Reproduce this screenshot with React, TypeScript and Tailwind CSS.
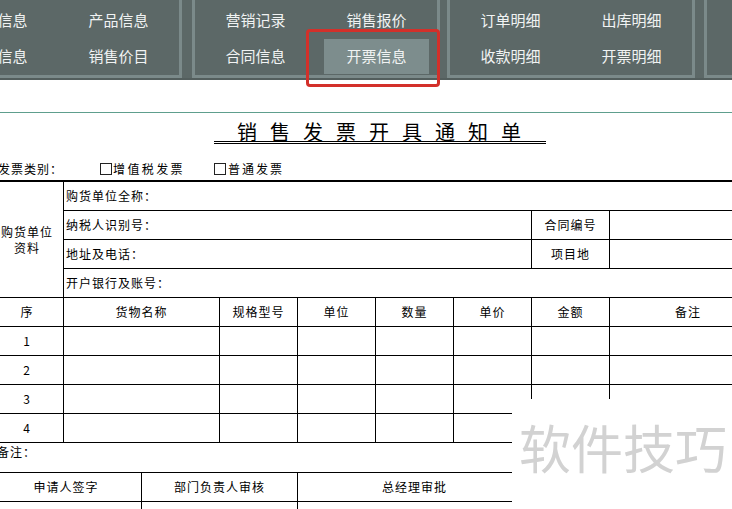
import React from "react"

const panels: { cells: string[][]; gap: string }[] = [
    { cells: [["客户信息", "产品信息"], ["员工信息", "销售价目"]], gap: "ml-[-66px]" },
    { cells: [["营销记录", "销售报价"], ["合同信息", "开票信息"]], gap: "ml-[10px]" },
    { cells: [["订单明细", "出库明细"], ["收款明细", "开票明细"]], gap: "ml-[7px]" },
    { cells: [["", ""], ["", ""]], gap: "ml-[9px]" },
]

function Panel(props: { cells: string[][]; gap: string }) {
    return (
        <div className={`${props.gap} h-[78px] w-[248px] shrink-0 border-x-[3px] border-b-[3px] border-[#7b8a8a] pt-[2px]`}>
            {props.cells.map((row, r) => (
                <div key={r} className="grid h-[36px] grid-cols-2">
                    {row.map((label, c) =>
                        label === "开票信息" ? (
                            <div key={c} className="flex items-center justify-center">
                                <div className="mt-[1px] flex h-[35px] w-[105px] items-center justify-center bg-[#7d8d8d]">{label}</div>
                            </div>
                        ) : (
                            <div key={c} className="flex items-center justify-center">{label}</div>
                        )
                    )}
                </div>
            ))}
        </div>
    )
}

const itemCols = ["w-[73px]", "w-[156px]", "w-[78px]", "w-[78px]", "w-[78px]", "w-[78px]", "w-[78px]"]
const itemHead = ["序", "货物名称", "规格型号", "单位", "数量", "单价", "金额", "备注"]

function ItemRow(props: { values: string[] }) {
    return (
        <div className="flex h-[29px] border-b border-black">
            {itemCols.map((w, i) => (
                <div key={i} className={`${w} flex shrink-0 items-center justify-center border-r border-black`}>
                    {props.values[i]}
                </div>
            ))}
            <div className="flex w-[157px] shrink-0 items-center justify-center border-r border-black">{props.values[7]}</div>
        </div>
    )
}

function SignRow(props: { values: string[] }) {
    return (
        <div className="flex h-[29px] border-b border-black">
            <div className="flex w-[151px] shrink-0 items-center justify-center border-r border-black">{props.values[0]}</div>
            <div className="flex w-[156px] shrink-0 items-center justify-center border-r border-black">{props.values[1]}</div>
            <div className="flex w-[234px] shrink-0 items-center justify-center border-r border-black">{props.values[2]}</div>
            <div className="flex-1" />
        </div>
    )
}

export default function App() {
    return (
        <div className="relative h-[509px] w-[732px] overflow-hidden bg-white font-['Noto_Sans_CJK_SC',sans-serif]">
            {/* ribbon */}
            <div className="flex h-[80px] overflow-hidden border-b-2 border-[#535e5d] bg-[#5c6867] text-[15px] text-[#f1f3f3]">
                {panels.map((p, i) => (
                    <Panel key={i} cells={p.cells} gap={p.gap} />
                ))}
            </div>

            <div className="mt-[32px] border-t border-[#5e9e8d]" />

            {/* form */}
            <div className="ml-[-9px] w-[775px] text-[12px] tracking-[1px] text-black">
                <div className="h-[44px] pt-[10px]">
                    <div className="ml-[223px] inline-block border-b-[3px] border-double border-black pl-[23px] pr-[12px] text-[20px] leading-[18px] tracking-[13px]">
                        销售发票开具通知单
                    </div>
                </div>

                <div className="flex h-[23px] items-center leading-[23px]">
                    <span className="w-[109px] shrink-0 pl-[7px]">发票类别：</span>
                    <span className="flex w-[114px] shrink-0 items-center tracking-[2.4px]">
                        <span className="mr-[1px] inline-block h-[12px] w-[12px] border border-[#222]" />
                        增值税发票
                    </span>
                    <span className="flex items-center tracking-[2px]">
                        <span className="mr-[2px] inline-block h-[12px] w-[12px] border border-[#222]" />
                        普通发票
                    </span>
                </div>

                <div className="flex border-t-2 border-b border-black">
                    <div className="flex w-[73px] shrink-0 flex-col items-center justify-center border-r border-black leading-[16px]">
                        <span>购货单位</span>
                        <span>资料</span>
                    </div>
                    <div className="flex-1">
                        <div className="flex h-[29px] items-center border-b border-black pl-[2px]">购货单位全称：</div>
                        <div className="flex h-[29px] border-b border-black">
                            <div className="flex w-[468px] shrink-0 items-center border-r border-black pl-[2px]">纳税人识别号：</div>
                            <div className="flex w-[78px] shrink-0 items-center justify-center border-r border-black">合同编号</div>
                            <div className="flex-1" />
                        </div>
                        <div className="flex h-[29px] border-b border-black">
                            <div className="flex w-[468px] shrink-0 items-center border-r border-black pl-[2px]">地址及电话：</div>
                            <div className="flex w-[78px] shrink-0 items-center justify-center border-r border-black">项目地</div>
                            <div className="flex-1" />
                        </div>
                        <div className="flex h-[28px] items-center pl-[2px]">开户银行及账号：</div>
                    </div>
                </div>

                <ItemRow values={itemHead} />
                <ItemRow values={["1"]} />
                <ItemRow values={["2"]} />
                <ItemRow values={["3"]} />
                <ItemRow values={["4"]} />

                <div className="h-[30px] border-b border-black pl-[6px] leading-[18px]">备注：</div>

                <SignRow values={["申请人签字", "部门负责人审核", "总经理审批"]} />
                <SignRow values={["", "", ""]} />
            </div>

            {/* highlight box */}
            <div className="absolute left-[306px] top-[29px] h-[58px] w-[134px] rounded-[4px] border-[3px] border-[#d3302a]" />

            {/* watermark */}
            <div className="absolute left-[512px] top-[399px] h-[110px] w-[220px] bg-white pl-[7px] pt-[22px] text-[52px] leading-[52px] text-[#d2d2d2]">
                软件技巧
            </div>
        </div>
    )
}
